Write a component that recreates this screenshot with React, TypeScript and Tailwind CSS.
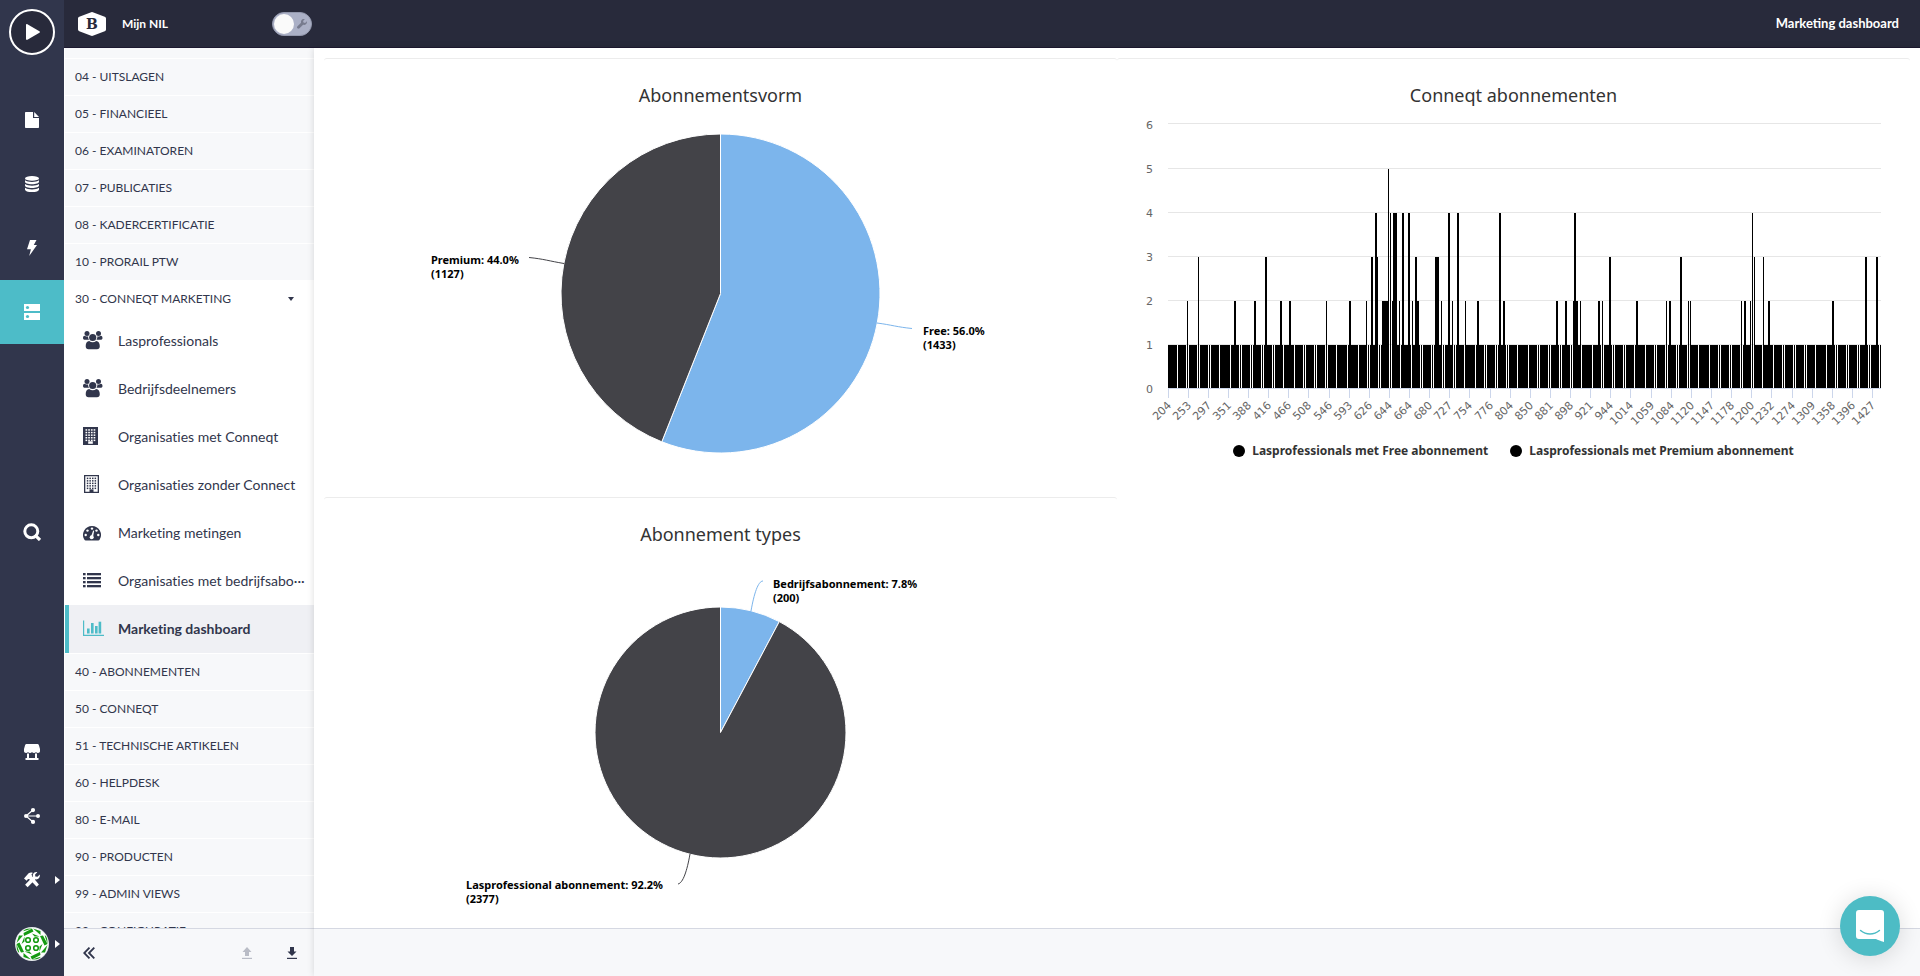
import { useState } from "react"
import type { ReactNode } from "react"

const topRows = [
  "04 - UITSLAGEN",
  "05 - FINANCIEEL",
  "06 - EXAMINATOREN",
  "07 - PUBLICATIES",
  "08 - KADERCERTIFICATIE",
  "10 - PRORAIL PTW",
]

const bottomRows = [
  "40 - ABONNEMENTEN",
  "50 - CONNEQT",
  "51 - TECHNISCHE ARTIKELEN",
  "60 - HELPDESK",
  "80 - E-MAIL",
  "90 - PRODUCTEN",
  "99 - ADMIN VIEWS",
  "99 - CONFIGURATIE",
]

/* ---------- icons ---------- */

function FileIcon() {
  return (
    <svg width="16" height="16" viewBox="0 0 16 16" fill="currentColor">
      <path d="M2 0h7v6h6v9.200a.8.8 0 0 1-.8.8H1.800a.8.8 0 0 1-.8-.8V.8A.8.8 0 0 1 1.800 0z" />
      <path d="M10.200 0L15 4.900h-4.800z" />
    </svg>
  )
}

function DatabaseIcon() {
  return (
    <svg width="16" height="16" viewBox="0 0 16 16" fill="currentColor">
      <ellipse cx="8" cy="2.400" rx="7" ry="2.400" />
      <path d="M1 4.200c1.500 1.300 4 1.700 7 1.700s5.500-.4 7-1.700v1.600C15 7.300 12 8.300 8 8.300S1 7.300 1 5.800z" />
      <path d="M1 8c1.500 1.300 4 1.700 7 1.700s5.500-.4 7-1.700v1.600c0 1.500-3 2.500-7 2.500s-7-1-7-2.500z" />
      <path d="M1 11.800c1.500 1.300 4 1.700 7 1.700s5.500-.4 7-1.700v1.600c0 1.600-3 2.600-7 2.600s-7-1-7-2.600z" />
    </svg>
  )
}

function BoltIcon() {
  return (
    <svg width="16" height="16" viewBox="0 0 16 16" fill="currentColor">
      <path d="M6 0h6.500L9.800 5H13L5.200 16l1.700-6.800H3z" />
    </svg>
  )
}

function ServerIcon() {
  return (
    <svg width="16" height="16" viewBox="0 0 16 16">
      <path d="M0 0h16v7H0zM0 9h16v7H0z" fill="#fff" />
      <circle cx="3.500" cy="3.500" r="1.600" fill="#4dbcc8" />
      <circle cx="3.500" cy="12.500" r="1.600" fill="#4dbcc8" />
    </svg>
  )
}

function SearchIcon() {
  return (
    <svg width="18" height="18" viewBox="0 0 18 18" fill="none" stroke="currentColor">
      <circle cx="8.300" cy="8.300" r="6.500" strokeWidth="3" />
      <path d="M11.800 11.800l5.200 5.200" strokeWidth="3.200" />
    </svg>
  )
}

function StoreIcon() {
  return (
    <svg width="16" height="16" viewBox="0 0 16 16" fill="currentColor">
      <path d="M3 0h10c1 0 1.700.5 2 1.400l1 3.600v1.800A2 2 0 0 1 14 9c-.9 0-1.600-.4-2-1-.4.6-1.100 1-2 1s-1.600-.4-2-1c-.4.6-1.100 1-2 1s-1.600-.4-2-1c-.4.6-1.100 1-2 1a2 2 0 0 1-2-2.200V5l1-3.600C1.300.5 2 0 3 0z" />
      <path d="M3 9.500h2V14h6V9.500h2V14h1.500v2h-13v-2H3z" />
    </svg>
  )
}

function ShareIcon() {
  return (
    <svg width="16" height="16" viewBox="0 0 16 16" fill="currentColor">
      <path d="M2 8h12M2 8l7-6M2 8l7 6" stroke="currentColor" strokeWidth="1.200" />
      <circle cx="2" cy="8" r="2" />
      <circle cx="14" cy="8" r="2" />
      <circle cx="9" cy="2.100" r="2.100" />
      <circle cx="9" cy="13.900" r="2.100" />
    </svg>
  )
}

function ToolsIcon() {
  return (
    <svg width="16" height="16" viewBox="0 0 16 16" fill="currentColor">
      <path d="M4.600 1.200C6.200.3 7.800.4 8.900 1L7.500 2.300l.6 1.900L14.900 12.500l-2.200 2.300-7.300-7.600-1.400-.2-1.300 1.800L0 6.400z" />
      <path d="M15.800 2.600L13.500 4.800 11.300 4.500 11.100 2.400 13.300.2C11.700-.3 9.800.4 9 2.200c-.3.8-.3 1.600 0 2.400L1.100 12.700l2.500 2.600 7.900-8c2.500.8 4.900-1.700 4.300-4.700z" />
    </svg>
  )
}

function AvatarIcon() {
  return (
    <svg width="34" height="34" viewBox="0 0 34 34">
      <defs>
        <clipPath id="avatar-clip">
          <circle cx="17" cy="17" r="16" />
        </clipPath>
      </defs>
      <circle cx="17" cy="17" r="17" fill="#e9ecef" />
      <g clipPath="url(#avatar-clip)">
        <rect width="34" height="34" fill="#fff" />
        <g fill="#159a12">
          {[0, 90, 180, 270].map((a) => (
            <g key={a} transform={`rotate(${a} 17 17)`}>
              <path d="M8.500 1.500h8.500l-8.500 2.800z" />
              <path d="M17 1.500l1.500 3-9.500 4.500-.5-3z" />
              <path d="M18 1.500l7.500 2.500v4z" />
              <path d="M9.500 9.500v5l-3 2.500z" />
            </g>
          ))}
        </g>
        <g fill="#fff" stroke="#159a12" strokeWidth="1.600">
          <circle cx="13" cy="13" r="2.300" />
          <circle cx="21" cy="13" r="2.300" />
          <circle cx="13" cy="21" r="2.300" />
          <circle cx="21" cy="21" r="2.300" />
        </g>
      </g>
    </svg>
  )
}

function MenuSvg({ children }: { children: ReactNode }) {
  return (
    <svg width="22" height="20" viewBox="0 0 22 20" fill="currentColor" className="shrink-0">
      {children}
    </svg>
  )
}

function GroupIcon() {
  return (
    <MenuSvg>
      <circle cx="4" cy="3.500" r="2.500" />
      <circle cx="15.500" cy="3.500" r="2.500" />
      <path d="M0 8c0-1.500.8-2.200 1.600-2.200C2.500 6.600 4 6.800 5.100 6.300c-.1 1.500.3 2.500 1 3.500H2C.6 9.800 0 9.200 0 8z" />
      <path d="M19.500 8c0-1.500-.8-2.200-1.600-2.200-.9.800-2.400 1-3.500.5.100 1.500-.3 2.500-1 3.500h4.100c1.400 0 2-.6 2-1.800z" />
      <circle cx="9.700" cy="7.500" r="3.600" />
      <path d="M6.200 11c2 1.700 5 1.700 7 0 2.300.1 3.600 2.300 3.600 5.200 0 2-1.100 3-2.800 3H5.500c-1.700 0-2.800-1-2.800-3 0-2.900 1.200-5.100 3.500-5.200z" />
    </MenuSvg>
  )
}

const windows = [0, 1, 2, 3, 4].flatMap((r) => [0, 1, 2, 3].map((c) => [c, r]))

function BuildingIcon() {
  return (
    <MenuSvg>
      <rect y="1" width="15" height="18" />
      {windows.map(([c, r]) => (
        <rect key={`${c}-${r}`} x={2.500 + c * 2.700} y={3.200 + r * 2.600} width="1.700" height="1.500" fill="#fff" />
      ))}
      <rect x="5.200" y="15.300" width="4.600" height="2.500" fill="#fff" />
    </MenuSvg>
  )
}

function BuildingOutlineIcon() {
  return (
    <MenuSvg>
      <path d="M1 1h15v18H1zM2.300 2.300v15.400h12.400V2.300z" fillRule="evenodd" />
      {windows.map(([c, r]) => (
        <rect key={`${c}-${r}`} x={3.800 + c * 2.600} y={3.600 + r * 2.500} width="1.500" height="1.500" />
      ))}
      <rect x="6.500" y="15.400" width="4" height="2.600" />
    </MenuSvg>
  )
}

function GaugeIcon() {
  return (
    <MenuSvg>
      <path d="M9 4a9 9 0 0 1 7.700 13.600c-.3.600-.8.900-1.500.9H2.800c-.7 0-1.200-.3-1.500-.9A9 9 0 0 1 9 4z" />
      <g fill="#fff">
        <circle cx="2.700" cy="13" r="1.200" />
        <circle cx="4.500" cy="8.600" r="1.200" />
        <circle cx="9" cy="6.600" r="1.200" />
        <circle cx="13.500" cy="8.600" r="1.200" />
        <circle cx="15.300" cy="13" r="1.200" />
        <circle cx="8.700" cy="15.200" r="2" />
        <path d="M8 14.500L10.200 8.500l1 .3-1.200 6.200z" />
      </g>
    </MenuSvg>
  )
}

function ListIcon() {
  return (
    <MenuSvg>
      {[3, 7, 11, 15].map((y) => (
        <g key={y}>
          <rect y={y} width="2.600" height="2.300" />
          <rect x="4" y={y} width="14" height="2.300" />
        </g>
      ))}
    </MenuSvg>
  )
}

function ChartIcon() {
  return (
    <MenuSvg>
      <path d="M0 2.500h1.200v14.300H21V18H0z" />
      <rect x="4" y="10.500" width="2.600" height="5" />
      <rect x="8" y="5" width="2.600" height="10.500" />
      <rect x="12" y="8" width="2.600" height="7.500" />
      <rect x="15.600" y="3.700" width="2.600" height="11.800" />
    </MenuSvg>
  )
}

function Arrow({ up }: { up?: boolean }) {
  return (
    <svg width="12" height="12" viewBox="0 0 12 12" fill="currentColor">
      {up ? <path d="M6 0l4.500 5H8v4H4V5H1.500z" /> : <path d="M6 9L1.500 4.500H4V0h4v4.500h2.500z" />}
      <rect x="1" y="10.800" width="10" height="1.200" />
    </svg>
  )
}

const menuItems = [
  { label: "Lasprofessionals", icon: <GroupIcon /> },
  { label: "Bedrijfsdeelnemers", icon: <GroupIcon /> },
  { label: "Organisaties met Conneqt", icon: <BuildingIcon /> },
  { label: "Organisaties zonder Connect", icon: <BuildingOutlineIcon /> },
  { label: "Marketing metingen", icon: <GaugeIcon /> },
  { label: "Organisaties met bedrijfsabo···", icon: <ListIcon /> },
  { label: "Marketing dashboard", icon: <ChartIcon />, active: true },
]

/* ---------- navigation ---------- */

function RailButton({ label, active, arrow, children }: { label: string; active?: boolean; arrow?: boolean; children: ReactNode }) {
  return (
    <button
      aria-label={label}
      className={`relative flex h-16 w-full items-center justify-center ${active ? "bg-[#4dbcc8]" : ""}`}
    >
      {children}
      {arrow && (
        <span className="absolute right-1 border-y-4 border-l-[5px] border-y-transparent border-l-white" />
      )}
    </button>
  )
}

function Rail() {
  return (
    <nav className="flex w-16 shrink-0 flex-col bg-[#31364c] text-white">
      <div className="flex h-[88px] shrink-0 justify-center pt-[9px]">
        <button
          aria-label="Start"
          className="flex h-[46px] w-[46px] items-center justify-center rounded-full border-2 border-white bg-[#282a3b]"
        >
          <svg width="14" height="16" viewBox="0 0 14 16" fill="currentColor" className="ml-0.5">
            <path d="M1.400.2l12 7c.6.4.6 1.200 0 1.600l-12 7C.8 16.100 0 15.700 0 15V1C0 .3.8-.1 1.400.2z" />
          </svg>
        </button>
      </div>
      <RailButton label="Pagina's"><FileIcon /></RailButton>
      <RailButton label="Data"><DatabaseIcon /></RailButton>
      <RailButton label="Acties"><BoltIcon /></RailButton>
      <RailButton label="Views" active><ServerIcon /></RailButton>
      <div className="flex flex-1 items-center">
        <RailButton label="Zoeken"><SearchIcon /></RailButton>
      </div>
      <RailButton label="Winkel"><StoreIcon /></RailButton>
      <RailButton label="Delen"><ShareIcon /></RailButton>
      <RailButton label="Gereedschap" arrow><ToolsIcon /></RailButton>
      <RailButton label="Profiel" arrow><AvatarIcon /></RailButton>
    </nav>
  )
}

function SectionRow({ label }: { label: string }) {
  return (
    <a href="#" className="flex h-[37px] shrink-0 items-center border-t border-white bg-[#f7f8fa] pl-[10px]">
      {label}
    </a>
  )
}

function Sidebar() {
  return (
    <aside className="flex w-[250px] shrink-0 flex-col text-[#31364c]">
      <div className="flex min-h-0 flex-1 flex-col overflow-hidden border-l border-white text-[12px]">
        <div className="h-[10px] shrink-0 bg-[#f7f8fa]" />
        {topRows.map((row) => (
          <SectionRow key={row} label={row} />
        ))}
        <button className="flex h-[37px] shrink-0 items-center justify-between bg-white pl-[10px] pr-5">
          30 - CONNEQT MARKETING
          <span className="border-x-[3px] border-t-4 border-x-transparent border-t-[#31364c]" />
        </button>
        {menuItems.map(({ label, icon, active }) => (
          <a
            key={label}
            href="#"
            className={`flex h-12 shrink-0 items-center gap-[13px] border-l-4 pb-0.5 pl-[14px] text-[14px] whitespace-nowrap [font-variant-ligatures:none] ${
              active ? "border-[#4dbcc8] bg-[#eff0f4] font-bold" : "border-white bg-white"
            }`}
          >
            <span className={active ? "text-[#4dbcc8]" : ""}>{icon}</span>
            {label}
          </a>
        ))}
        {bottomRows.map((row, i) => (
          <SectionRow key={i} label={row} />
        ))}
      </div>
      <div className="flex h-12 shrink-0 items-center border-t border-[#d5d8e2] bg-[#f7f8fa] pl-[19px] pr-4">
        <button aria-label="Menu inklappen">
          <svg width="12" height="12" viewBox="0 0 12 12" fill="none" stroke="currentColor" strokeWidth="1.800">
            <path d="M6.500.6L1.200 6l5.300 5.400M11.300.6L6 6l5.300 5.400" />
          </svg>
        </button>
        <button aria-label="Omhoog" className="ml-auto text-[#b9bcc6]"><Arrow up /></button>
        <button aria-label="Omlaag" className="ml-[33px]"><Arrow /></button>
      </div>
    </aside>
  )
}

function Header() {
  const [on, setOn] = useState(false)
  return (
    <header className="flex h-12 shrink-0 items-center border-b border-[#1d1930] bg-[#282a3b] font-bold text-white">
      <div className="flex w-[250px] items-center pl-[14px] pr-0.5">
        <svg width="28" height="24" viewBox="0 0 28 24">
          <path d="M12.500.4a4 4 0 0 1 3 0l11.200 4.400c.8.3 1.300 1 1.300 1.800v10.800c0 .8-.5 1.500-1.300 1.800l-11.200 4.400a4 4 0 0 1-3 0L1.300 19.200A2 2 0 0 1 0 17.400V6.600c0-.8.500-1.500 1.300-1.800z" fill="#fff" />
          <text x="14" y="17" textAnchor="middle" className="fill-[#282a3b] font-['DejaVu_Serif'] text-[14px] font-bold">B</text>
        </svg>
        <span className="ml-4 text-[12px]">Mijn NIL</span>
        <label className="relative ml-auto flex h-6 w-10 items-center rounded-full border border-[#9398ad] bg-[#abb0c6] px-px">
          <input type="checkbox" aria-label="Bewerkmodus" checked={on} onChange={() => setOn(!on)} className="sr-only" />
          <span className="h-5 w-5 rounded-full bg-[#fafafa]" />
          <svg width="10" height="10" viewBox="0 0 16 16" className="ml-[3px] fill-[#777b8e]">
            <path d="M15.800 3.600L13 6.300l-2.600-.7L9.700 3 12.400.2C10.200-.4 8 .4 6.900 2.200c-.7 1.200-.8 2.500-.4 3.800L.8 11.700a2.200 2.200 0 0 0 0 3.200c.9.900 2.300.9 3.200 0l5.800-5.700c3.500 1.200 6.900-2 6-5.600z" />
          </svg>
        </label>
      </div>
      <h1 className="ml-auto pr-[21px] text-[13px]">Marketing dashboard</h1>
    </header>
  )
}

/* ---------- charts ---------- */

function ChartPanel({ title, children }: { title: string; children: ReactNode }) {
  return (
    <section className="min-h-[439px] rounded-t-[3px] border-t border-[#ececec] font-['Noto_Sans',sans-serif]">
      <h2 className="flex h-[52px] items-end justify-center pb-1 text-[18px] leading-6 text-[#333]">{title}</h2>
      {children}
    </section>
  )
}

type PieLabel = { x: number; y: number; text: string; count: string; line: string }

function Pie({ r, share, labels }: { r: number; share: number; labels: PieLabel[] }) {
  const cx = 396.500
  const cy = 182.500
  const a = share * 2 * Math.PI
  const ex = cx + r * Math.sin(a)
  const ey = cy - r * Math.cos(a)
  const large = share > 0.5 ? 1 : 0
  const colors = ["#7cb5ec", "#434348"]
  return (
    <svg viewBox="0 0 793 386" className="block w-full">
      <g stroke="#fff" strokeLinejoin="round">
        <path d={`M${cx} ${cy}V${cy - r}A${r} ${r} 0 ${large} 1 ${ex} ${ey}Z`} fill={colors[0]} />
        <path d={`M${cx} ${cy}L${ex} ${ey}A${r} ${r} 0 ${1 - large} 1 ${cx} ${cy - r}Z`} fill={colors[1]} />
      </g>
      {labels.map((l, i) => (
        <g key={l.text}>
          <path d={l.line} fill="none" stroke={colors[i]} />
          <text x={l.x} y={l.y} className="fill-black text-[11px] font-bold">
            {l.text}
            <tspan x={l.x} dy="14">{l.count}</tspan>
          </text>
        </g>
      ))}
    </svg>
  )
}

const xLabels = [
  204, 253, 297, 351, 388, 416, 466, 508, 546, 593, 626, 644, 664, 680, 727, 754, 776, 804, 850, 881, 898, 921, 944,
  1014, 1059, 1084, 1120, 1147, 1178, 1200, 1232, 1274, 1309, 1358, 1396, 1427,
]

// [offset, width, value] of every column above 1
const peaks = [
  [19, 1, 2], [30, 1, 3], [66, 2, 2], [86, 2, 2], [97, 2, 3], [112, 2, 2], [121, 2, 2], [158, 1, 2], [181, 2, 2],
  [198, 1, 2], [203, 2, 3], [207, 2, 4], [209, 1, 3], [214, 6, 2], [220, 1, 5], [222, 1, 4], [224, 1, 2], [225, 4, 4],
  [231, 1, 2], [234, 2, 4], [240, 2, 4], [244, 1, 2], [247, 2, 3], [249, 2, 2], [267, 4, 3], [273, 1, 2], [280, 2, 4],
  [284, 1, 2], [289, 2, 4], [297, 1, 2], [309, 2, 2], [331, 2, 4], [335, 2, 2], [388, 2, 2], [397, 2, 2], [405, 5, 2],
  [406, 2, 4], [412, 1, 2], [430, 2, 2], [434, 1, 2], [441, 2, 3], [468, 2, 2], [498, 1, 2], [501, 2, 2], [512, 2, 3],
  [520, 1, 2], [522, 1, 2], [573, 1, 2], [576, 2, 2], [582, 1, 2], [584, 1, 4], [586, 1, 3], [595, 1, 3], [600, 2, 2],
  [664, 2, 2], [697, 2, 3], [708, 2, 3],
]

// empty columns
const gaps = [
  9, 18, 20, 29, 31, 40, 42, 51, 62, 71, 73, 82, 84, 93, 95, 104, 106, 115, 126, 135, 137, 146, 148, 157, 159, 168, 179,
  190, 199, 201, 210, 212, 221, 223, 232, 243, 252, 254, 263, 265, 274, 276, 285, 287, 296, 307, 316, 318, 327, 329, 338,
  340, 349, 360, 369, 371, 380, 382, 391, 393, 402, 404, 413, 424, 433, 435, 444, 446, 455, 457, 466, 477, 486, 488, 497,
  499, 508, 510, 519, 521, 530, 541, 550, 552, 561, 563, 572, 574, 583, 585, 594, 605, 614, 616, 625, 627, 636, 638, 647,
  658, 667, 669, 678, 680, 689, 691, 700, 702, 711,
]

function ColumnChart() {
  const left = 51
  const base = 277
  return (
    <svg viewBox="0 0 793 316" className="block w-full">
      {[0, 1, 2, 3, 4, 5, 6].map((v) => (
        <g key={v}>
          {v > 0 && (
            <rect x={left} y={base - v * 44 - (v === 6 ? 1 : 0)} width="713" height="1" fill="#e6e6e6" />
          )}
          <text x="36" y={base - v * 44 + 5} textAnchor="end" className="fill-[#666] text-[11px] font-['DejaVu_Sans']">
            {v}
          </text>
        </g>
      ))}
      <rect x={left} y={base - 43} width="713" height="43" />
      {gaps.map((x) => (
        <rect key={x} x={left + x} y={base - 43} width="1" height="43" fill="#fff" />
      ))}
      {peaks.map(([x, w, v]) => (
        <rect key={x} x={left + x} y={base - v * 44 + 1} width={w} height={v * 44 - 44} />
      ))}
      <rect x={left} y={base} width="713" height="1" fill="#ccd6eb" />
      {xLabels.map((label, i) => {
        const x = left + Math.floor(i * 20.130)
        return (
          <g key={label}>
            <rect x={x} y={base} width="1" height="10" fill="#ccd6eb" />
            <text
              transform={`translate(${x + 4} ${base + 18}) rotate(-45)`}
              textAnchor="end"
              className="fill-[#666] text-[11px] font-['DejaVu_Sans']"
            >
              {label}
            </text>
          </g>
        )
      })}
    </svg>
  )
}

function Legend() {
  return (
    <div className="flex justify-center gap-[22px] pt-4 text-[12px] leading-4 font-bold text-[#333]">
      {["Lasprofessionals met Free abonnement", "Lasprofessionals met Premium abonnement"].map((name) => (
        <button key={name} className="flex items-center gap-[7px]">
          <span className="h-3 w-3 rounded-full bg-black" />
          {name}
        </button>
      ))}
    </div>
  )
}

export default function App() {
  return (
    <div className="flex h-screen overflow-hidden bg-white font-['Lato',sans-serif]">
      <Rail />
      <div className="flex min-w-0 flex-1 flex-col">
        <Header />
        <div className="flex min-h-0 flex-1">
          <Sidebar />
          <div className="flex min-w-0 flex-1 flex-col bg-white shadow-[0_0_7px_rgba(0,0,0,0.14)]">
            <main className="min-h-0 flex-1 overflow-hidden px-[10px] pt-[10px]">
              <div className="grid grid-cols-2">
                <ChartPanel title="Abonnementsvorm">
                  <Pie
                    r={159.500}
                    share={0.56}
                    labels={[
                      { x: 599, y: 224, text: "Free: 56.0%", count: "(1433)", line: "M588 217.500C573 216 568 214 553 212" },
                      { x: 107, y: 153, text: "Premium: 44.0%", count: "(1127)", line: "M205 146.500C220 148 225 150 240 152.500" },
                    ]}
                  />
                </ChartPanel>
                <ChartPanel title="Conneqt abonnementen">
                  <ColumnChart />
                  <Legend />
                </ChartPanel>
                <ChartPanel title="Abonnement types">
                  <Pie
                    r={125.500}
                    share={0.0776}
                    labels={[
                      { x: 449, y: 38, text: "Bedrijfsabonnement: 7.8%", count: "(200)", line: "M439 31C434 31 430 44 427 61" },
                      { x: 142, y: 339, text: "Lasprofessional abonnement: 92.2%", count: "(2377)", line: "M354 334C359 333 363 321 366 304" },
                    ]}
                  />
                </ChartPanel>
              </div>
            </main>
            <footer className="h-12 shrink-0 border-t border-[#d5d8e2] bg-[#f7f8fa]" />
          </div>
        </div>
      </div>
      <button
        aria-label="Chat openen"
        className="fixed right-5 bottom-5 flex h-[60px] w-[60px] items-center justify-center rounded-full bg-[#4dbcc5] shadow-[0_2px_24px_rgba(0,0,0,0.14)]"
      >
        <svg width="28" height="32" viewBox="0 0 28 32">
          <path d="M3 0h22a3 3 0 0 1 3 3v29s-4-1-8-3H3a3 3 0 0 1-3-3V3a3 3 0 0 1 3-3z" fill="#fff" />
          <path d="M4.600 20.500c5.500 4.600 13.300 4.600 18.800 0" fill="none" stroke="#4dbcc5" strokeWidth="1.600" strokeLinecap="round" />
        </svg>
      </button>
    </div>
  )
}
